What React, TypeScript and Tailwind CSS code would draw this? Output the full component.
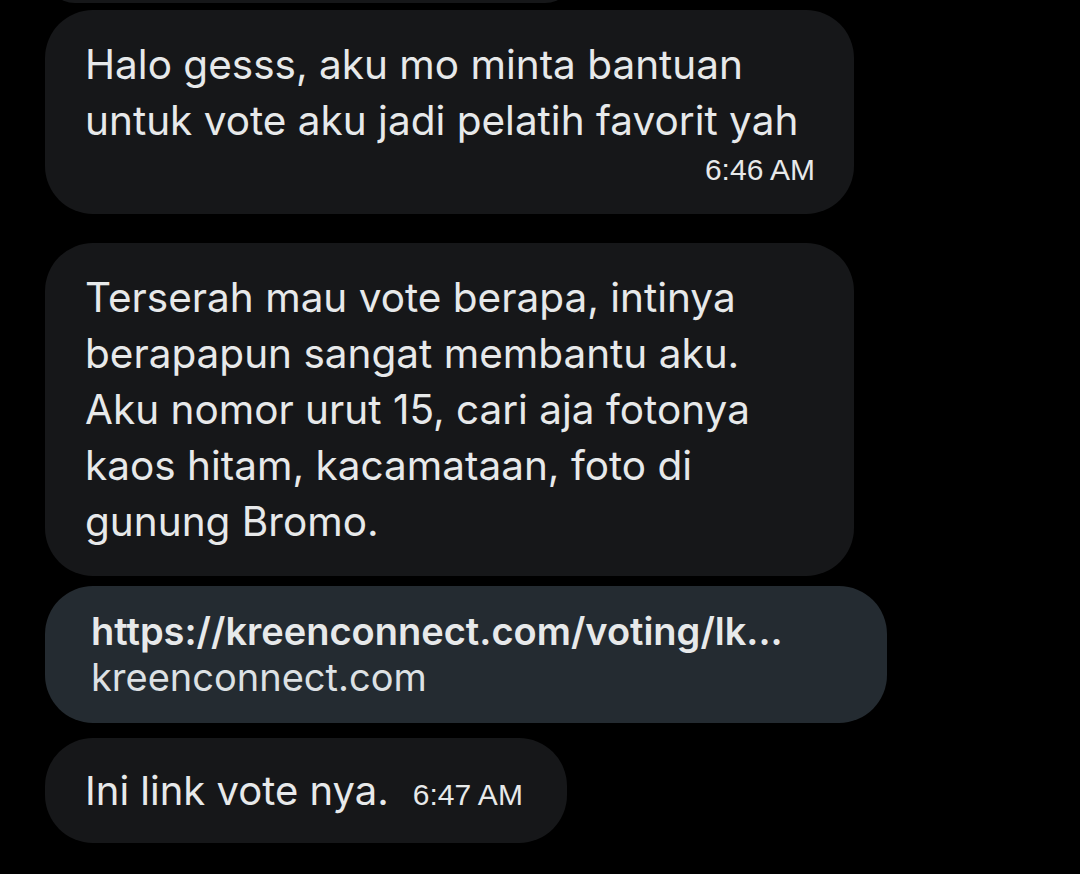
const body = "font-['Inter','Noto_Sans',sans-serif] text-[40.5px] leading-[56px] text-[#e7e9ea]";
const time = "font-['Liberation_Sans','Arial',sans-serif] text-[30px] leading-[36px] text-[#e7e9ea]";

const Bubble = ({ className, children }: { className: string; children: React.ReactNode }) => (
  <div className={`rounded-[48px] bg-[#161719] ${className}`}>{children}</div>
);

export default function App() {
  return (
    <div className="w-[1080px] h-[874px] overflow-hidden bg-black flex flex-col items-start pl-[45px]">
      {/* tail of the previous message, scrolled off the top */}
      <Bubble className="w-[530px] h-[60px] -mt-[57px] shrink-0">{null}</Bubble>

      <Bubble className="mt-[7px] w-[809px] pl-[40px] pr-[39px] pt-[27px] pb-[26px] shrink-0">
        <p className={body}>
          Halo gesss, aku mo minta bantuan
          <br />
          untuk vote aku jadi pelatih favorit yah
        </p>
        <div className={`${time} mt-[3px] text-right`}>6:46 AM</div>
      </Bubble>

      <Bubble className="mt-[29px] w-[809px] pl-[40px] pr-[39px] pt-[27px] pb-[26px] shrink-0">
        <p className={body}>
          Terserah mau vote berapa, intinya
          <br />
          berapapun sangat membantu aku.
          <br />
          Aku nomor urut 15, cari aja fotonya
          <br />
          kaos hitam, kacamataan, foto di
          <br />
          gunung Bromo.
        </p>
      </Bubble>

      {/* link card */}
      <div className="mt-[10px] w-[842px] rounded-[48px] bg-[#242b31] pl-[46px] pr-[40px] pt-[22px] pb-[23px] shrink-0 font-['Inter','Noto_Sans',sans-serif] text-[38px] leading-[46px] text-[#e7e9ea]">
        <div className="font-semibold whitespace-nowrap">https://kreenconnect.com/voting/lk...</div>
        <div className="text-[#dde1e4]">kreenconnect.com</div>
      </div>

      <Bubble className="mt-[15px] w-[522px] pl-[40px] pt-[25px] pb-[24px] flex items-baseline shrink-0">
        <span className={`${body} text-[40px] whitespace-nowrap`}>Ini link vote nya.</span>
        <span className={`${time} ml-[24px] whitespace-nowrap`}>6:47 AM</span>
      </Bubble>
    </div>
  );
}
